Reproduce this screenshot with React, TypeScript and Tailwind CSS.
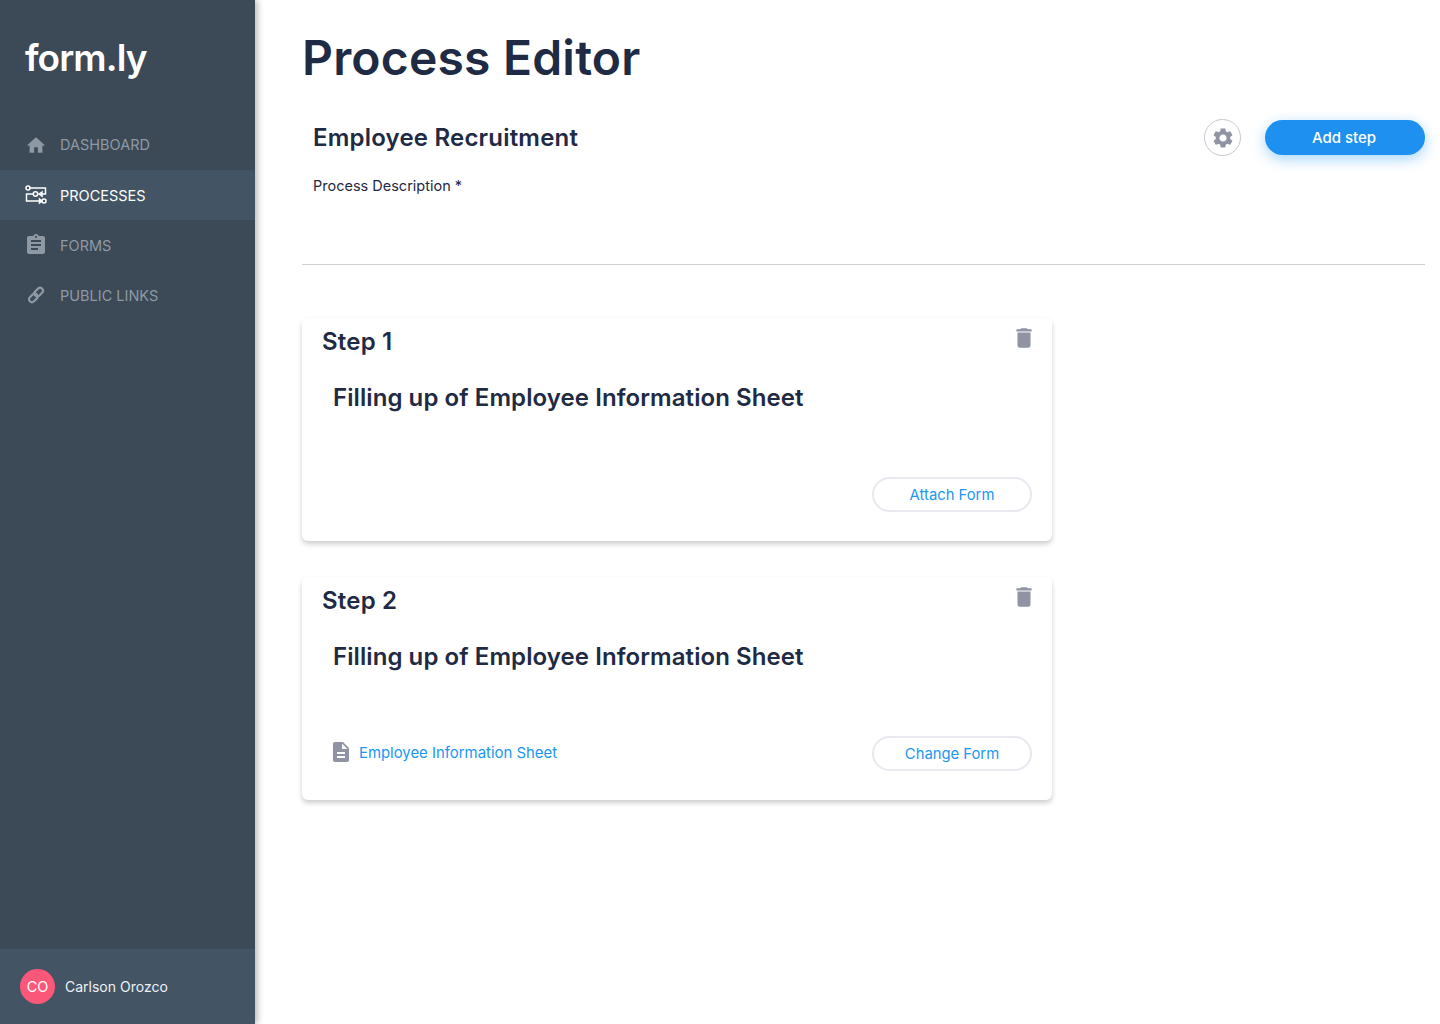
import React from "react";
import { MdHome, MdAssignment, MdSettings, MdDelete, MdDescription } from "react-icons/md";

function ProcessIcon() {
  return (
    <svg width="22" height="20" viewBox="0 0 22 20" fill="none" stroke="#fff" strokeWidth="1.5">
      <circle cx="3" cy="3" r="2" />
      <path d="M5 3H20.5V9H15" />
      <path d="M17 7L14 9L17 11Z" fill="#fff" />
      <circle cx="10.5" cy="9" r="2.2" />
      <path d="M8.3 9H1.5V16H14.5" />
      <path d="M14.5 14L17 16L14.5 18Z" fill="#fff" />
      <circle cx="19" cy="16" r="2" />
    </svg>
  );
}

function LinkIcon() {
  return (
    <svg width="18" height="18" viewBox="0 0 18 18" fill="none" stroke="#8f99a4" strokeWidth="2.2">
      <rect x="6.9" y="3.2" width="9.6" height="5.8" rx="2.9" transform="rotate(-45 11.7 6.1)" />
      <rect x="1.5" y="9" width="9.6" height="5.8" rx="2.9" transform="rotate(-45 6.3 11.9)" />
    </svg>
  );
}

function NavItem({ icon, label, active, shift }: { icon: React.ReactNode; label: string; active?: boolean; shift?: boolean }) {
  return (
    <div className={`flex h-[50px] items-center pl-[25px] ${active ? "bg-[#435464] text-white" : "text-[#8f99a4]"}`}>
      <span className="flex w-[22px] justify-center">{icon}</span>
      <span className={`ml-[13px] text-[14.5px] leading-none ${shift ? "pt-[2px]" : ""}`}>{label}</span>
    </div>
  );
}

function StepCard({ step, children, button }: { step: string; children?: React.ReactNode; button: string }) {
  return (
    <section className="flex h-[223px] w-[750px] flex-col rounded-[6px] bg-white pl-[20px] pr-[20px] shadow-[0_3px_5px_rgba(0,0,0,0.2)]">
      <div className="flex items-start justify-between">
        <h3 className="mt-[8px] text-[24px] leading-[32px] font-semibold tracking-[0.2px] text-[#1f2a44]">{step}</h3>
        <MdDelete className="mt-[7px] mr-[-5px]" size={26} color="#8f93a3" />
      </div>
      <h4 className="mt-[24px] ml-[11px] text-[24px] leading-[32px] font-semibold tracking-[0.08px] text-[#1f2a44]">Filling up of Employee Information Sheet</h4>
      <div className="mt-auto mb-[29px] flex items-center justify-between">
        <div className="ml-[7px] flex items-center">{children}</div>
        <button className="h-[35px] w-[160px] rounded-full border-2 border-[#e8e8f0] bg-white pt-[1px] text-[14.8px] text-[#2196f3]">{button}</button>
      </div>
    </section>
  );
}

export default function App() {
  return (
    <div className="flex h-[1024px] w-[1440px] overflow-hidden bg-white font-['Inter','Noto_Sans',sans-serif]">
      <aside className="z-10 flex h-full w-[255px] shrink-0 flex-col bg-[#3c4957] shadow-[3px_0_6px_rgba(0,0,0,0.25)]">
        <div className="ml-[25px] mt-[34px] text-[37px] leading-[48px] font-semibold tracking-[-0.9px] text-white">form.ly</div>
        <nav className="mt-[38px]">
          <NavItem icon={<MdHome size={23} />} label="DASHBOARD" />
          <NavItem icon={<ProcessIcon />} label="PROCESSES" active shift />
          <NavItem icon={<MdAssignment className="shrink-0" size={24} />} label="FORMS" shift />
          <NavItem icon={<LinkIcon />} label="PUBLIC LINKS" shift />
        </nav>
        <div className="mt-auto flex h-[75px] items-center bg-[#435464] pl-[20px]">
          <div className="flex h-[35px] w-[35px] items-center justify-center rounded-full bg-[#fb5779] text-[14.5px] text-white">CO</div>
          <span className="ml-[10px] text-[14px] text-[#eef1f4]">Carlson Orozco</span>
        </div>
      </aside>
      <main className="flex-1 pl-[47px] pr-[15px]">
        <h1 className="mt-[28px] text-[48px] leading-[60px] font-semibold tracking-[0.2px] text-[#1f2a44]">Process Editor</h1>
        <div className="mt-[31px] flex items-center justify-between pl-[11px]">
          <h2 className="text-[24px] leading-[35px] font-semibold tracking-[0.2px] text-[#1f2a44]">Employee Recruitment</h2>
          <div className="flex items-center">
            <div className="flex h-[37px] w-[37px] items-center justify-center rounded-full border border-[#c9c9ce]">
              <MdSettings size={24} color="#8f93a3" />
            </div>
            <button className="ml-[24px] h-[35px] w-[160px] rounded-full bg-[#1e91f0] pt-[1px] pr-[2px] text-[15px] font-medium text-white shadow-[0_4px_14px_rgba(33,150,243,0.4)]">Add step</button>
          </div>
        </div>
        <p className="mt-[20px] pl-[11px] text-[14.5px] leading-[20px] text-[#1f2a44]">Process Description *</p>
        <hr className="mt-[68px] border-t border-[#cfcfcf]" />
        <div className="mt-[53px] flex flex-col gap-[36px]">
          <StepCard step="Step 1" button="Attach Form" />
          <StepCard step="Step 2" button="Change Form">
            <MdDescription className="mt-[-2px]" size={24} color="#8f93a3" />
            <span className="ml-[6px] text-[14.9px] text-[#2196f3]">Employee Information Sheet</span>
          </StepCard>
        </div>
      </main>
    </div>
  );
}
